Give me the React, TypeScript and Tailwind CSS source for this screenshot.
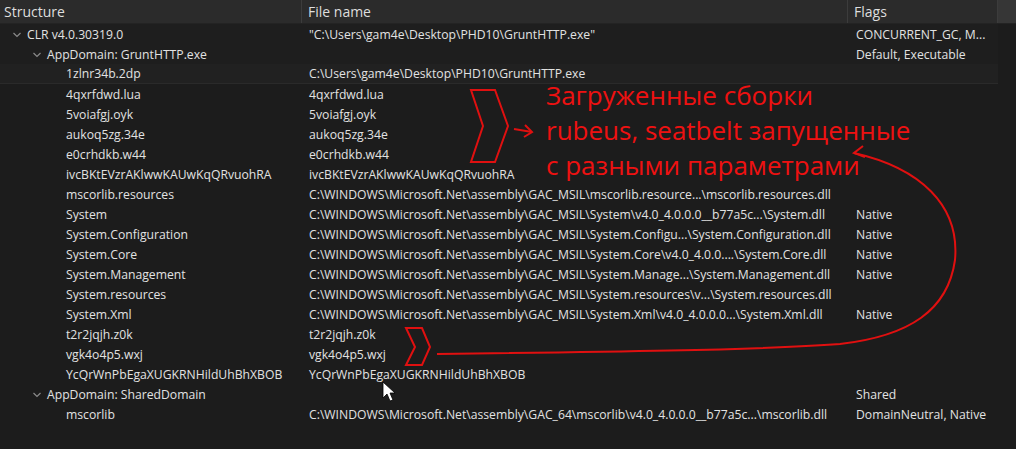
import { ReactNode } from "react";

type Row = {
  level: 0 | 1 | 2;
  name: string;
  file?: string;
  flags?: string;
  selected?: boolean;
};

const rows: Row[] = [
  { level: 0, name: "CLR v4.0.30319.0", file: '"C:\\Users\\gam4e\\Desktop\\PHD10\\GruntHTTP.exe"', flags: "CONCURRENT_GC, M..." },
  { level: 1, name: "AppDomain: GruntHTTP.exe", flags: "Default, Executable" },
  { level: 2, name: "1zlnr34b.2dp", file: "C:\\Users\\gam4e\\Desktop\\PHD10\\GruntHTTP.exe", selected: true },
  { level: 2, name: "4qxrfdwd.lua", file: "4qxrfdwd.lua" },
  { level: 2, name: "5voiafgj.oyk", file: "5voiafgj.oyk" },
  { level: 2, name: "aukoq5zg.34e", file: "aukoq5zg.34e" },
  { level: 2, name: "e0crhdkb.w44", file: "e0crhdkb.w44" },
  { level: 2, name: "ivcBKtEVzrAKlwwKAUwKqQRvuohRA", file: "ivcBKtEVzrAKlwwKAUwKqQRvuohRA" },
  { level: 2, name: "mscorlib.resources", file: "C:\\WINDOWS\\Microsoft.Net\\assembly\\GAC_MSIL\\mscorlib.resource...\\mscorlib.resources.dll" },
  { level: 2, name: "System", file: "C:\\WINDOWS\\Microsoft.Net\\assembly\\GAC_MSIL\\System\\v4.0_4.0.0.0__b77a5c...\\System.dll", flags: "Native" },
  { level: 2, name: "System.Configuration", file: "C:\\WINDOWS\\Microsoft.Net\\assembly\\GAC_MSIL\\System.Configu...\\System.Configuration.dll", flags: "Native" },
  { level: 2, name: "System.Core", file: "C:\\WINDOWS\\Microsoft.Net\\assembly\\GAC_MSIL\\System.Core\\v4.0_4.0.0....\\System.Core.dll", flags: "Native" },
  { level: 2, name: "System.Management", file: "C:\\WINDOWS\\Microsoft.Net\\assembly\\GAC_MSIL\\System.Manage...\\System.Management.dll", flags: "Native" },
  { level: 2, name: "System.resources", file: "C:\\WINDOWS\\Microsoft.Net\\assembly\\GAC_MSIL\\System.resources\\v...\\System.resources.dll" },
  { level: 2, name: "System.Xml", file: "C:\\WINDOWS\\Microsoft.Net\\assembly\\GAC_MSIL\\System.Xml\\v4.0_4.0.0.0...\\System.Xml.dll", flags: "Native" },
  { level: 2, name: "t2r2jqjh.z0k", file: "t2r2jqjh.z0k" },
  { level: 2, name: "vgk4o4p5.wxj", file: "vgk4o4p5.wxj" },
  { level: 2, name: "YcQrWnPbEgaXUGKRNHildUhBhXBOB", file: "YcQrWnPbEgaXUGKRNHildUhBhXBOB" },
  { level: 1, name: "AppDomain: SharedDomain", flags: "Shared" },
  { level: 2, name: "mscorlib", file: "C:\\WINDOWS\\Microsoft.Net\\assembly\\GAC_64\\mscorlib\\v4.0_4.0.0.0__b77a5c...\\mscorlib.dll", flags: "DomainNeutral, Native" },
];

const indent = ["pl-[12px]", "pl-[32px]", "pl-[66px]"];

function Chevron() {
  return (
    <svg width="10" height="8" viewBox="0 0 10 8" className="mr-[5px] shrink-0">
      <polyline points="1.5,2 5,5.5 8.5,2" fill="none" stroke="#8a8a8a" strokeWidth="1.2" />
    </svg>
  );
}

function HeaderCell({ className, children }: { className: string; children: ReactNode }) {
  return <div className={`flex h-full items-center border-r border-[#3c3c3c] px-[4px] ${className}`}>{children}</div>;
}

function Annotations() {
  return (
    <div className="pointer-events-none absolute inset-0">
      <svg width="1016" height="449" className="absolute left-0 top-0">
        <g fill="none" stroke="#e01010" strokeWidth="2" strokeLinejoin="miter">
          <polygon points="471,90 495,90 508,126 495,162 471,162 483,126" />
          <polygon points="406,328 422,328 430,347 422,365 406,365 415,347" />
          <line x1="514" y1="129" x2="532" y2="132" />
          <polyline points="525,125 532,132 524,137" />
          <path d="M437,354 C600,352 760,350 840,344 C910,336 948,310 955,260 C960,205 920,168 854,153" />
          <polyline points="863,146 854,153 865,157" />
        </g>
        <path d="M383,382 L383,398 L387,394 L390,401 L393,400 L390,393 L395,393 Z" fill="#ffffff" stroke="#000000" strokeWidth="0.8" />
      </svg>
      <div className="absolute left-[546px] top-[78px] font-['Open_Sans',sans-serif] text-[26px] leading-[35px] text-[#ee1111]">
        <div>Загруженные сборки</div>
        <div>rubeus, seatbelt запущенные</div>
        <div>с разными параметрами</div>
      </div>
    </div>
  );
}

export default function App() {
  return (
    <div className="relative h-[449px] w-[1016px] overflow-hidden bg-[#1c1c1c] font-['Open_Sans',sans-serif] text-[12.2px] text-[#e2e2e2]">
      <div className="flex h-[24px] border-b border-[#232323] bg-[#2b2b2b] text-[14px] text-[#dedede]">
        <HeaderCell className="w-[302px]">Structure</HeaderCell>
        <HeaderCell className="w-[546px] pl-[6px]">File name</HeaderCell>
        <HeaderCell className="w-[150px] pl-[6px]">Flags</HeaderCell>
        <div className="flex-1 bg-[#363636]" />
      </div>
      <div className="flex flex-col">
        {rows.map((r, i) => (
          <div
            key={i}
            className={`flex h-[20px] w-[998px] items-center pt-[2px] ${r.selected ? "border-b border-[#2a2a2a] bg-[#212121]" : i < 2 ? "bg-[#1e1e1e]" : ""}`}
          >
            <div className={`flex w-[302px] items-center whitespace-nowrap ${indent[r.level]}`}>
              {r.level < 2 ? <Chevron /> : null}
              {r.name}
            </div>
            <div className="w-[546px] whitespace-nowrap pl-[7px]">{r.file}</div>
            <div className="w-[150px] whitespace-nowrap pl-[8px]">{r.flags}</div>
          </div>
        ))}
      </div>
      <Annotations />
    </div>
  );
}
